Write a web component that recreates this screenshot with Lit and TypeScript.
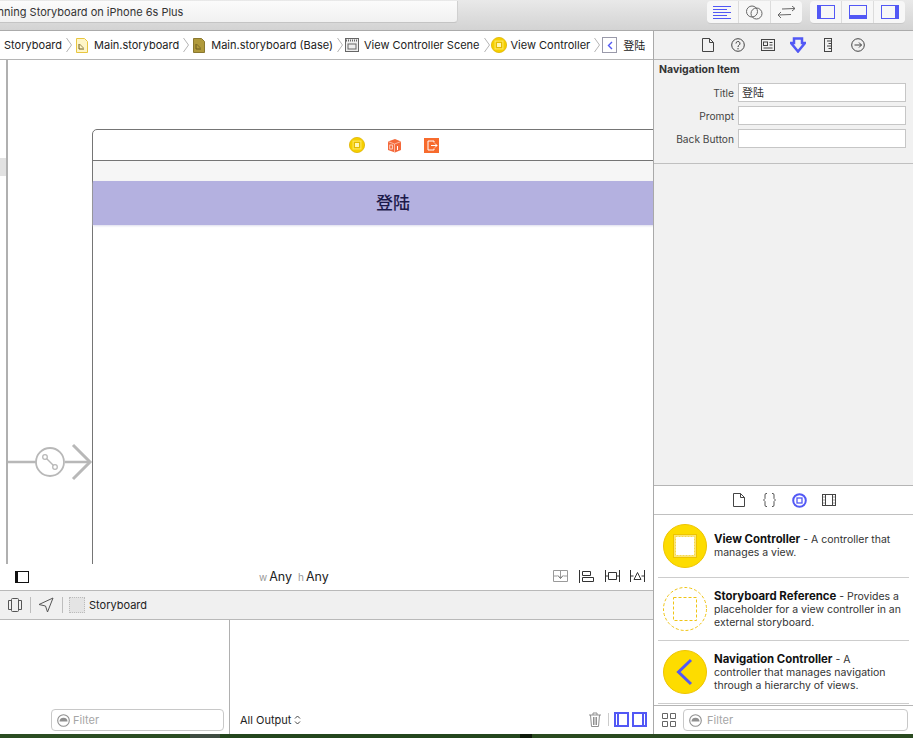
import { LitElement, html, css } from 'lit';
import { customElement } from 'lit/decorators.js';

const BLUE = '#5258f5';

const doc = html`<svg width="14" height="16" viewBox="0 0 14 16" fill="none" stroke="#444" stroke-width="1"><path d="M1.500 1.500h7l4 4v9h-11zM8.500 1.500v4h4"/></svg>`;
const chev = html`<svg width="6" height="16" viewBox="0 0 6 16" fill="none" stroke="#b4b4b4"><path d="M.5 1l5 7-5 7"/></svg>`;
const boardIcon = (bg: string, line: string) => html`<svg width="12" height="15" viewBox="0 0 12 15"><path d="M.5.5h8l3 3v11H.5z" fill="${bg}" stroke="${line}"/><path d="M3 6v5h5" fill="none" stroke="#6b5a20"/><path d="M3.500 6l4 4" stroke="#6b5a20" stroke-width=".7"/></svg>`;
const vcCoin = html`<svg width="16" height="16" viewBox="0 0 16 16"><circle cx="8" cy="8" r="7.600" fill="#f5cf00" stroke="#e0b400" stroke-width=".8"/><rect x="3.500" y="3.500" width="9" height="9" fill="#ffe552"/><rect x="4.800" y="4.800" width="6.400" height="6.400" fill="#e3bb00"/><rect x="6" y="6" width="4" height="4" fill="#fff7b8"/></svg>`;
const filterIcon = html`<svg width="13" height="13" viewBox="0 0 13 13"><circle cx="6.500" cy="6.500" r="5.800" fill="none" stroke="#8f8f8f" stroke-width="1.100"/><path d="M2.500 7.500a4 3.800 0 0 1 8 0z" fill="#8f8f8f"/></svg>`;

@customElement('app-root')
export class AppRoot extends LitElement {
  static styles = css`
    :host {
      display: flex;
      flex-direction: column;
      width: 913px;
      height: 738px;
      overflow: hidden;
      font-family: 'Inter', 'Noto Sans CJK SC', sans-serif;
      font-size: 11px;
      color: #222;
      background: #24421c;
    }
    svg { display: block; flex: none; }
    .toolbar {
      height: 31px;
      flex: none;
      box-sizing: border-box;
      display: flex;
      justify-content: space-between;
      padding: 1px 8px 0 0;
      background: linear-gradient(#e9e9e9, #d3d3d3);
      border-bottom: 1px solid #ababab;
    }
    .status {
      width: 458px;
      height: 22px;
      box-sizing: border-box;
      display: flex;
      align-items: center;
      font-size: 11px;
      color: #333;
      background: linear-gradient(#fbfbfb, #f1f1f1);
      border-bottom: 1px solid #c4c4c4;
      border-right: 1px solid #d0d0d0;
      border-radius: 0 0 4px 0;
      overflow: hidden;
      white-space: nowrap;
    }
    .status span { margin-left: -16px; }
    .tool-groups { display: flex; gap: 8px; }
    .seg {
      display: flex;
      width: 95px;
      height: 22px;
      background: #f7f7f7;
      border-radius: 4px;
      border-bottom: 1px solid #c8c8c8;
    }
    .seg > div {
      flex: 1;
      display: flex;
      align-items: center;
      justify-content: center;
      border-left: 1px solid #dcdcdc;
    }
    .seg > div:first-child { border-left: 0; }
    .main { display: flex; flex: none; height: 703px; }
    .left {
      width: 654px;
      flex: none;
      box-sizing: border-box;
      display: flex;
      flex-direction: column;
      background: #fff;
      border-right: 1px solid #a9a9a9;
    }
    .jump {
      height: 29px;
      flex: none;
      box-sizing: border-box;
      display: flex;
      align-items: center;
      padding-left: 4px;
      gap: 4px;
      white-space: nowrap;
      overflow: hidden;
      border-bottom: 1px solid #b5b5b5;
      font-size: 11px;
    }
    .jump .name { margin-left: 2px; }
    .jump .tight { margin-left: -2px; }
    .jump .tighter { margin-left: -3px; }
    .jump .back {
      width: 15px;
      height: 16px;
      box-sizing: border-box;
      margin-left: -2px;
      border: 1px solid #9a9aaa;
      display: flex;
      align-items: center;
      justify-content: center;
    }
    .canvas {
      position: relative;
      height: 530px;
      flex: none;
      overflow: hidden;
      background: #fff;
    }
    .outline {
      position: absolute;
      left: 0;
      top: 0;
      width: 6px;
      height: 505px;
      border-right: 2px solid #b0b0b0;
    }
    .outline div { height: 18px; margin-top: 98px; background: #e2e2e2; }
    .scene {
      position: absolute;
      left: 92px;
      top: 69px;
      width: 700px;
      height: 460px;
      box-sizing: border-box;
      border: 1px solid #757575;
      border-top-left-radius: 5px;
      background: #fff;
    }
    .scene-head {
      height: 31px;
      box-sizing: border-box;
      padding-left: 256px;
      display: flex;
      align-items: center;
      gap: 22px;
      border-bottom: 1px solid #757575;
    }
    .scene-status { height: 20px; background: #f6f6f6; }
    .navbar {
      height: 44px;
      width: 600px;
      box-sizing: border-box;
      padding-bottom: 3px;
      display: flex;
      align-items: center;
      justify-content: center;
      background: #b4b1e0;
      box-shadow: 0 1px 2px #dcdcec;
      font-size: 17px;
      font-weight: 500;
      color: #1c1a4a;
    }
    .segue { position: absolute; left: 7px; top: 382px; }
    .canvas-bar {
      position: absolute;
      left: 0;
      right: 0;
      bottom: 0;
      height: 26px;
      display: flex;
      align-items: center;
      background: #fff;
      padding-left: 15px;
      box-sizing: border-box;
    }
    .size {
      position: absolute;
      left: 259px;
      top: 5px;
      font-size: 12.500px;
      color: #222;
      display: flex;
      gap: 6px;
      align-items: baseline;
    }
    .size small { font-size: 10px; color: #999; margin-right: 2px; }
    .layout-tools { position: absolute; left: 553px; top: 6px; display: flex; gap: 11px; }
    .debug {
      height: 30px;
      flex: none;
      box-sizing: border-box;
      display: flex;
      align-items: center;
      padding-left: 8px;
      background: #f0f0f0;
      border-top: 1px solid #b9b9b9;
      border-bottom: 1px solid #b9b9b9;
      font-size: 11px;
    }
    .debug .sep { width: 1px; height: 16px; background: #bdbdbd; margin: 0 7px 0 8px; }
    .debug .thumb {
      width: 16px;
      height: 16px;
      box-sizing: border-box;
      margin: 0 4px 0 -1px;
      border: 1px dotted #bbb;
      background: #e4e4e4;
    }
    .console { flex: 1; display: flex; min-height: 0; }
    .vars {
      width: 230px;
      box-sizing: border-box;
      border-right: 1px solid #b0b0b0;
      display: flex;
      justify-content: flex-end;
      align-items: flex-end;
      padding: 0 5px 3px 0;
    }
    .filter {
      height: 22px;
      box-sizing: border-box;
      display: flex;
      align-items: center;
      gap: 3px;
      padding-left: 5px;
      background: #fff;
      border: 1px solid #c8c8c8;
      border-radius: 4px;
      color: #a6a6a6;
      font-size: 11px;
    }
    .vars .filter { width: 173px; }
    .output {
      flex: 1;
      display: flex;
      align-items: flex-end;
      justify-content: space-between;
      padding: 0 6px 7px 10px;
    }
    .output .label { display: flex; align-items: center; gap: 3px; }
    .output .tools { display: flex; align-items: center; gap: 3px; }
    .output .vsep { width: 1px; height: 13px; background: #ccc; margin: 0 2px 0 3px; }
    .right {
      flex: 1;
      display: flex;
      flex-direction: column;
      background: #f1f1f1;
      min-width: 0;
    }
    .tabs {
      height: 29px;
      flex: none;
      box-sizing: border-box;
      display: flex;
      align-items: center;
      padding-left: 39px;
      border-bottom: 1px solid #b5b5b5;
    }
    .tabs > div {
      width: 30px;
      display: flex;
      justify-content: center;
    }
    .section {
      height: 104px;
      flex: none;
      box-sizing: border-box;
      padding: 4px 7px 0 5px;
      border-bottom: 1px solid #c0c0c0;
    }
    .section h4 { margin: 0 0 7px; font-size: 10.500px; line-height: 12px; font-weight: 700; color: #333; }
    .row {
      display: grid;
      grid-template-columns: 75px 168px;
      column-gap: 4px;
      align-items: center;
      margin-bottom: 4px;
      color: #444;
      font-size: 10.200px;
    }
    .row label { text-align: right; }
    .row .input {
      height: 19px;
      box-sizing: border-box;
      padding: 1px 0 0 3px;
      background: #fff;
      border: 1px solid #c6c6c6;
      line-height: 17px;
      font-size: 11px;
      color: #333;
    }
    .spacer { flex: 1; border-bottom: 1px solid #b5b5b5; }
    .lib {
      height: 248px;
      flex: none;
      background: #fff;
      display: flex;
      flex-direction: column;
    }
    .lib .tabs { padding-left: 70px; background: #fff; border-bottom-color: #c0c0c0; }
    .item {
      height: 63px;
      flex: none;
      box-sizing: border-box;
      display: flex;
      align-items: center;
      gap: 7px;
      margin: 0 4px;
      padding-left: 5px;
      border-bottom: 1px solid #cdcdcd;
      font-size: 10.500px;
      line-height: 13px;
      color: #333;
    }
    .item b { color: #111; font-weight: 700; font-size: 11.400px; }
    .item p { margin: 0; }
    .lib-foot {
      margin-top: auto;
      height: 29px;
      flex: none;
      box-sizing: border-box;
      display: flex;
      align-items: center;
      gap: 7px;
      padding: 0 5px 0 8px;
      border-top: 1px solid #b5b5b5;
    }
    .lib-foot .filter { flex: 1; gap: 5px; }
    .wallpaper { flex: 1; display: flex; }
    .wallpaper i { display: block; }
    .wall-a { width: 190px; background: #2b4d22; }
    .wall-b { width: 30px; background: #3f4c42; }
    .wall-c { width: 300px; background: #24461d; }
    .wall-d { width: 12px; background: #0e1a0a; }
    .wall-e { flex: 1; background: #2a4a20; }
  `;

  render() {
    return html`
      <div class="toolbar">
        <div class="status"><span>Running Storyboard on iPhone 6s Plus</span></div>
        <div class="tool-groups">
          <div class="seg">
            <div><svg width="19" height="13" viewBox="0 0 19 13" fill="none" stroke="${BLUE}"><path d="M0 .5h18M0 3.500h14M0 6.500h18M0 9.500h14M0 12.500h18"/></svg></div>
            <div><svg width="17" height="15" viewBox="0 0 17 15" fill="none" stroke="#666"><circle cx="6" cy="6.500" r="5.500"/><circle cx="10.500" cy="8.500" r="5.500"/></svg></div>
            <div><svg width="19" height="12" viewBox="0 0 19 12" fill="none" stroke="#666"><path d="M5 3l13-.5M15 0l3 2.500-3 2.500M14 8.500L1 9M4 6L1 9l3 3"/></svg></div>
          </div>
          <div class="seg">
            <div><svg width="18" height="14" viewBox="0 0 18 14" fill="none" stroke="${BLUE}"><rect x=".5" y=".5" width="17" height="13"/><rect x="1" y="1" width="3" height="12" fill="${BLUE}" stroke="none"/></svg></div>
            <div><svg width="18" height="14" viewBox="0 0 18 14" fill="none" stroke="${BLUE}"><rect x=".5" y=".5" width="17" height="13"/><rect x="1" y="10" width="16" height="3" fill="${BLUE}" stroke="none"/></svg></div>
            <div><svg width="18" height="14" viewBox="0 0 18 14" fill="none" stroke="${BLUE}"><rect x=".5" y=".5" width="17" height="13"/><rect x="14" y="1" width="3" height="12" fill="${BLUE}" stroke="none"/></svg></div>
          </div>
        </div>
      </div>
      <div class="main">
        <div class="left">
          <div class="jump">
            <span>Storyboard</span>${chev}
            ${boardIcon('#fff6c8', '#e8c640')}<span class="name">Main.storyboard</span>${chev}
            ${boardIcon('#b09a3c', '#8a7830')}<span class="name">Main.storyboard (Base)</span>${chev}
            <svg class="tight" width="14" height="14" viewBox="0 0 14 14"><rect x=".5" y=".5" width="13" height="13" fill="#eee" stroke="#666"/><path d="M1 2.500h12" stroke="#666" stroke-dasharray="1 1" stroke-width="2"/><rect x="3" y="6" width="8" height="5" fill="none" stroke="#666"/></svg>
            <span style="margin-left:1px">View Controller Scene</span>${chev}
            <span class="tighter">${vcCoin}</span><span>View Controller</span>${chev}
            <div class="back"><svg width="6" height="9" viewBox="0 0 6 9" fill="none" stroke="${BLUE}" stroke-width="1.400"><path d="M5 1L1.500 4.500 5 8"/></svg></div>
            <span class="name">登陆</span>
          </div>
          <div class="canvas">
            <div class="outline"><div></div></div>
            <div class="scene">
              <div class="scene-head">
                ${vcCoin}
                <svg width="15" height="15" viewBox="0 0 15 15"><path d="M1 3.500L8 1l6 2.500V12l-6 2.500L1 12z" fill="#f4683a"/><path d="M1 3.500L7.500 6v8.500M7.500 6L14 3.500" fill="none" stroke="#ffd8c8" stroke-width=".7"/><path d="M10.500 8v4" stroke="#fff"/><rect x="2.800" y="7" width="2.500" height="4" fill="none" stroke="#fff" stroke-width=".7"/></svg>
                <svg width="15" height="15" viewBox="0 0 15 15"><rect width="15" height="15" fill="#f76b2d"/><path d="M10 4.500V3H4v9h6v-1.500M7 7.500h6M11 5.500l2 2-2 2" fill="none" stroke="#fff"/></svg>
              </div>
              <div class="scene-status"></div>
              <div class="navbar">登陆</div>
            </div>
            <svg class="segue" width="86" height="40" viewBox="0 0 86 40" fill="none" stroke="#b8b8b8">
              <path d="M1 20h28M58 20h25" stroke-width="2.500"/>
              <path d="M66 3l17 17-17 17" stroke-width="3"/>
              <circle cx="43" cy="20" r="14" stroke-width="1.800"/>
              <path d="M39 16l8 8" stroke-width="1.500"/>
              <circle cx="38" cy="15" r="2.300" fill="#fff" stroke-width="1.300"/>
              <circle cx="48" cy="25" r="2.300" fill="#fff" stroke-width="1.300"/>
            </svg>
            <div class="canvas-bar">
              <svg width="14" height="12" viewBox="0 0 14 12" fill="none" stroke="#111"><rect x=".5" y=".5" width="13" height="11"/><rect x="1" y="1" width="2" height="10" fill="#111" stroke="none"/></svg>
              <div class="size"><span><small>w</small>Any</span><span><small>h</small>Any</span></div>
              <div class="layout-tools">
                <svg width="15" height="12" viewBox="0 0 15 12" fill="none" stroke="#9a9a9a"><path d="M.5.5h14v11H.5zM.5 6h4M10.500 6h4M7.500 1v7"/><path d="M5 5.500l2.500 3 2.500-3" stroke="#666"/></svg>
                <svg width="15" height="13" viewBox="0 0 15 13" fill="none" stroke="#333"><path d="M.5 0v13M3.500 1.500h8v4h-8zM3.500 7.500h11v4h-11z"/></svg>
                <svg width="15" height="12" viewBox="0 0 15 12" fill="none" stroke="#333"><path d="M.5 0v12M14.500 0v12M.5 6h3M11.500 6h3M3.500 2.500h8v7h-8z"/></svg>
                <svg width="15" height="12" viewBox="0 0 15 12" fill="none" stroke="#333" style="margin-left:-1px"><path d="M.5 0v12M14.500 0v12M.5 6h3M11.500 6h3M7.500 2.500l3.500 7H4z"/></svg>
              </div>
            </div>
          </div>
          <div class="debug">
            <svg width="14" height="14" viewBox="0 0 14 14" fill="none" stroke="#555"><rect x="3.500" y=".5" width="7" height="13" rx="1"/><path d="M3.500 2.500H.5v9h3M10.500 2.500h3v9h-3"/></svg>
            <div class="sep"></div>
            <svg width="16" height="16" viewBox="0 0 16 16" fill="none" stroke="#555"><path d="M15 1L1 7.500l6.500 1.500L9.500 15z"/></svg>
            <div class="sep"></div>
            <div class="thumb"></div>
            <span>Storyboard</span>
          </div>
          <div class="console">
            <div class="vars"><div class="filter">${filterIcon}<span>Filter</span></div></div>
            <div class="output">
              <div class="label"><span>All Output</span>
                <svg width="7" height="10" viewBox="0 0 7 10" fill="none" stroke="#444"><path d="M1 3.500L3.500 1 6 3.500M1 6.500L3.500 9 6 6.500"/></svg></div>
              <div class="tools">
                <svg width="14" height="15" viewBox="0 0 14 15" fill="none" stroke="#8f8f8f"><path d="M1 3h12M5 3V1h4v2M2.500 3l1 11.500h7l1-11.500M5.500 5v8M7 5v8M8.500 5v8"/></svg>
                <div class="vsep"></div>
                <svg width="15" height="15" viewBox="0 0 15 15"><rect x="1" y="1" width="13" height="13" fill="none" stroke="${BLUE}" stroke-width="2"/><rect x="3" y="2" width="2" height="11" fill="${BLUE}"/></svg>
                <svg width="15" height="15" viewBox="0 0 15 15"><rect x="1" y="1" width="13" height="13" fill="none" stroke="${BLUE}" stroke-width="2"/><rect x="10" y="2" width="2" height="11" fill="${BLUE}"/></svg>
              </div>
            </div>
          </div>
        </div>
        <div class="right">
          <div class="tabs">
            <div>${doc}</div>
            <div><svg width="14" height="14" viewBox="0 0 14 14"><circle cx="7" cy="7" r="6.300" fill="none" stroke="#444"/><path d="M5 5.500a2 2 0 1 1 3 1.700q-1 .5-1 1.800" fill="none" stroke="#444"/><circle cx="7" cy="10.800" r=".7" fill="#444"/></svg></div>
            <div><svg width="14" height="12" viewBox="0 0 14 12" fill="none" stroke="#444"><rect x=".5" y=".5" width="13" height="11"/><rect x="2.500" y="3" width="4" height="3.500"/><path d="M8.500 3.500h3M8.500 6h3M2.500 9h9"/></svg></div>
            <div><svg width="16" height="16" viewBox="0 0 16 16"><path d="M4 1.500h8V6h3l-7 8.500L1 6h3z" fill="none" stroke="${BLUE}" stroke-width="2.500"/></svg></div>
            <div><svg width="8" height="14" viewBox="0 0 8 14" fill="none" stroke="#444"><rect x=".5" y=".5" width="7" height="13"/><path d="M3 3h4.500M4.500 5.500h3M3 8h4.500M4.500 10.500h3"/></svg></div>
            <div><svg width="14" height="14" viewBox="0 0 14 14" fill="none" stroke="#444"><circle cx="7" cy="7" r="6.300"/><path d="M3.500 7h7M8 4.500L10.500 7 8 9.500"/></svg></div>
          </div>
          <div class="section">
            <h4>Navigation Item</h4>
            <div class="row"><label>Title</label><div class="input">登陆</div></div>
            <div class="row"><label>Prompt</label><div class="input"></div></div>
            <div class="row"><label>Back Button</label><div class="input"></div></div>
          </div>
          <div class="spacer"></div>
          <div class="lib">
            <div class="tabs">
              <div>${doc}</div>
              <div><svg width="13" height="14" viewBox="0 0 13 14" fill="none" stroke="#555"><path d="M4 .5H3Q2 .5 2 2v3.500L.5 7 2 8.500V12q0 1.500 1 1.500h1M9 .5h1Q11 .5 11 2v3.500L12.500 7 11 8.500V12q0 1.500-1 1.500H9"/></svg></div>
              <div><svg width="15" height="15" viewBox="0 0 15 15" fill="none" stroke="${BLUE}"><circle cx="7.500" cy="7.500" r="6.300" stroke-width="2"/><rect x="5" y="5" width="5" height="5" stroke-width="1.300"/></svg></div>
              <div><svg width="14" height="12" viewBox="0 0 14 12" fill="none" stroke="#444"><rect x=".5" y=".5" width="13" height="11"/><path d="M3.500 1v10M10.500 1v10"/><path d="M1.500 3h1M1.500 6h1M1.500 9h1M11.500 3h1M11.500 6h1M11.500 9h1"/></svg></div>
            </div>
            <div class="item">
              <svg width="44" height="44" viewBox="0 0 44 44"><circle cx="22" cy="22" r="21.500" fill="#fddc00" stroke="#eec400"/><rect x="10.500" y="10.500" width="23" height="23" fill="#fbe577" stroke="#eec400"/><rect x="12.500" y="12.500" width="19" height="19" fill="#fff" stroke="#f6d84a" stroke-dasharray="2 1"/></svg>
              <p><b>View Controller</b> - A controller that<br />manages a view.</p>
            </div>
            <div class="item">
              <svg width="44" height="44" viewBox="0 0 44 44" fill="none" stroke="#efc415"><circle cx="22" cy="22" r="21.500" stroke-dasharray="3 2"/><rect x="10.500" y="10.500" width="23" height="23" stroke-dasharray="3 2"/></svg>
              <p><b>Storyboard Reference</b> - Provides a<br />placeholder for a view controller in an<br />external storyboard.</p>
            </div>
            <div class="item">
              <svg width="44" height="44" viewBox="0 0 44 44"><circle cx="22" cy="22" r="21.500" fill="#fddc00" stroke="#eec400"/><path d="M28 10L15.500 22 28 34" fill="none" stroke="${BLUE}" stroke-width="3"/></svg>
              <p><b>Navigation Controller</b> - A<br />controller that manages navigation<br />through a hierarchy of views.</p>
            </div>
            <div class="lib-foot">
              <svg width="14" height="14" viewBox="0 0 14 14" fill="none" stroke="#666"><path d="M.5.5h5v5h-5zM8.500.5h5v5h-5zM.5 8.500h5v5h-5zM8.500 8.500h5v5h-5z"/></svg>
              <div class="filter">${filterIcon}<span>Filter</span></div>
            </div>
          </div>
        </div>
      </div>
      <div class="wallpaper"><i class="wall-a"></i><i class="wall-b"></i><i class="wall-c"></i><i class="wall-d"></i><i class="wall-e"></i></div>
    `;
  }
}
